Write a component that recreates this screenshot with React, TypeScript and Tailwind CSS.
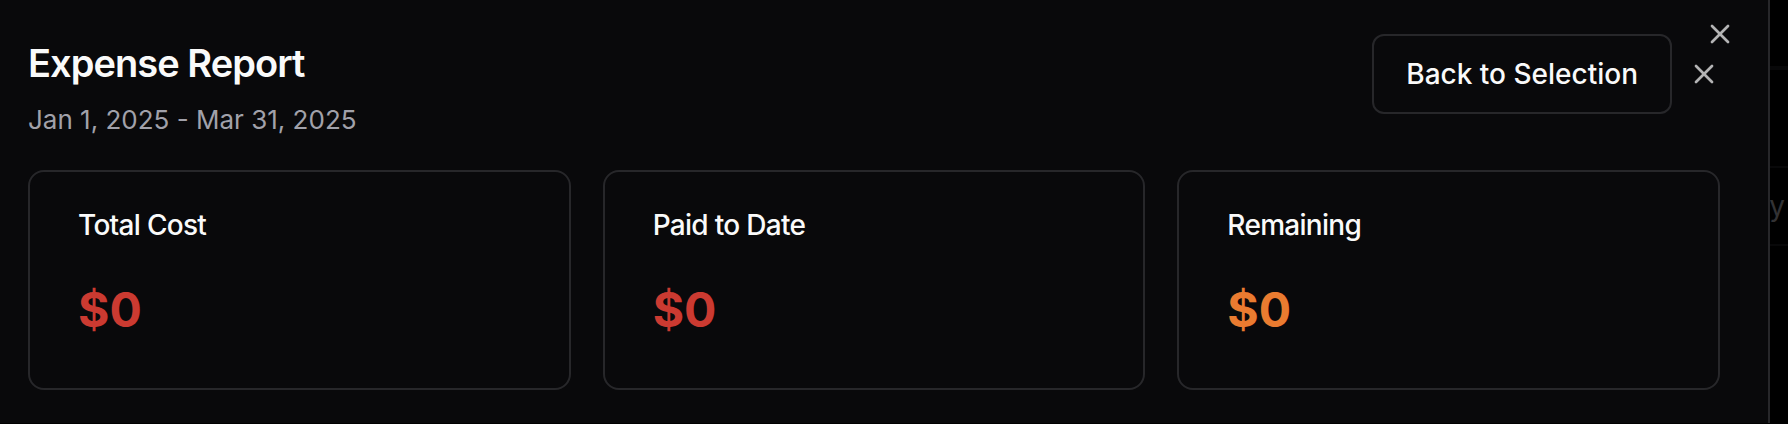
import { X } from "lucide-react";

const cards = [
  { label: "Total Cost", value: "$0", tone: "text-[#cb3a31]" },
  { label: "Paid to Date", value: "$0", tone: "text-[#cb3a31]" },
  { label: "Remaining", value: "$0", tone: "text-[#ea7b30]" },
];

export default function App() {
  return (
    <div className="flex min-h-screen border-b border-black bg-black font-['Inter',sans-serif] text-[#fafafa]">
      <main className="relative min-w-0 flex-1 border-r-2 border-[#27272a] bg-[#09090b] pt-[34px] pr-12 pb-8 pl-7">
        <button type="button" aria-label="Close panel" className="absolute top-[18px] right-8 text-[#b4b4b5]">
          <X size={32} strokeWidth={2} />
        </button>
        <header className="flex items-start justify-between">
          <div>
            <h1 className="pt-2 text-[38px] leading-[42px] font-semibold tracking-tight">Expense Report</h1>
            <p className="mt-4 text-[26px] leading-10 text-[#a1a1aa]">Jan 1, 2025 - Mar 31, 2025</p>
          </div>
          <div className="flex items-center gap-4">
            <button type="button" className="h-20 rounded-xl border-2 border-[#27272a] px-8 text-[28px] font-medium">
              Back to Selection
            </button>
            <button type="button" aria-label="Close report" className="text-[#b4b4b5]">
              <X size={32} strokeWidth={2} />
            </button>
          </div>
        </header>
        <section className="mt-[30px] grid grid-cols-3 gap-8">
          {cards.map((card) => (
            <article key={card.label} className="rounded-2xl border-2 border-[#27272a] px-12 pt-8 pb-[46px]">
              <h2 className="text-[28px] leading-[42px] font-medium tracking-tight">{card.label}</h2>
              <p className={`mt-8 text-5xl leading-16 font-bold ${card.tone}`}>{card.value}</p>
            </article>
          ))}
        </section>
      </main>
      <aside className="w-[18px] overflow-hidden text-[28px] text-[#323234]">
        <div className="h-[70px] border-b-4 border-[#080809]" />
        <div className="h-[98px] border-b-2 border-[#080809]" />
        <div className="flex h-[78px] items-center justify-center border-b-2 border-[#080809] pr-1">y</div>
      </aside>
    </div>
  );
}
